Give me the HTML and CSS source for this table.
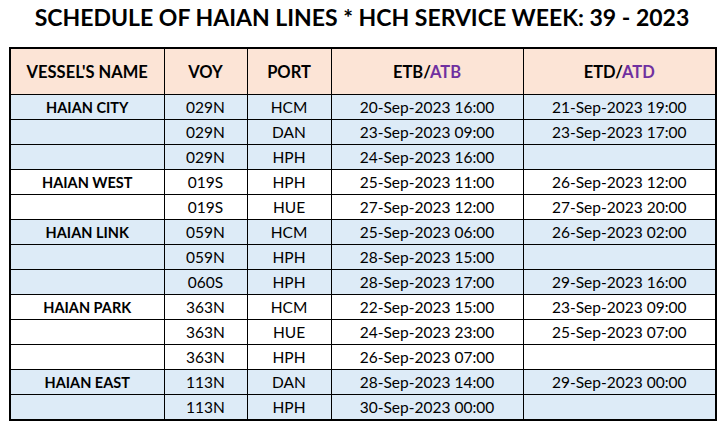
FILE: index.html
```html
<!DOCTYPE html>
<html>
<head>
<meta charset="utf-8">
<link rel="stylesheet" href="styles.css">
</head>
<body>
<div class="page">
  <h1 class="title">SCHEDULE OF HAIAN LINES * HCH SERVICE WEEK: 39 - 2023</h1>
  <table class="sched">
    <colgroup>
      <col class="c-vessel"><col class="c-voy"><col class="c-port"><col class="c-etb"><col class="c-etd">
    </colgroup>
    <thead>
      <tr class="head">
        <th>VESSEL'S NAME</th><th>VOY</th><th>PORT</th>
        <th>ETB/<span class="actual">ATB</span></th>
        <th>ETD/<span class="actual">ATD</span></th>
      </tr>
    </thead>
    <tbody>
      <tr class="blue"><td class="vessel">HAIAN CITY</td><td>029N</td><td>HCM</td><td>20-Sep-2023 16:00</td><td>21-Sep-2023 19:00</td></tr>
      <tr class="blue"><td class="vessel"></td><td>029N</td><td>DAN</td><td>23-Sep-2023 09:00</td><td>23-Sep-2023 17:00</td></tr>
      <tr class="blue"><td class="vessel"></td><td>029N</td><td>HPH</td><td>24-Sep-2023 16:00</td><td></td></tr>
      <tr><td class="vessel">HAIAN WEST</td><td>019S</td><td>HPH</td><td>25-Sep-2023 11:00</td><td>26-Sep-2023 12:00</td></tr>
      <tr><td class="vessel"></td><td>019S</td><td>HUE</td><td>27-Sep-2023 12:00</td><td>27-Sep-2023 20:00</td></tr>
      <tr class="blue"><td class="vessel">HAIAN LINK</td><td>059N</td><td>HCM</td><td>25-Sep-2023 06:00</td><td>26-Sep-2023 02:00</td></tr>
      <tr class="blue"><td class="vessel"></td><td>059N</td><td>HPH</td><td>28-Sep-2023 15:00</td><td></td></tr>
      <tr class="blue"><td class="vessel"></td><td>060S</td><td>HPH</td><td>28-Sep-2023 17:00</td><td>29-Sep-2023 16:00</td></tr>
      <tr><td class="vessel">HAIAN PARK</td><td>363N</td><td>HCM</td><td>22-Sep-2023 15:00</td><td>23-Sep-2023 09:00</td></tr>
      <tr><td class="vessel"></td><td>363N</td><td>HUE</td><td>24-Sep-2023 23:00</td><td>25-Sep-2023 07:00</td></tr>
      <tr><td class="vessel"></td><td>363N</td><td>HPH</td><td>26-Sep-2023 07:00</td><td></td></tr>
      <tr class="blue"><td class="vessel">HAIAN EAST</td><td>113N</td><td>DAN</td><td>28-Sep-2023 14:00</td><td>29-Sep-2023 00:00</td></tr>
      <tr class="blue"><td class="vessel"></td><td>113N</td><td>HPH</td><td>30-Sep-2023 00:00</td><td></td></tr>
    </tbody>
  </table>
</div>
</body>
</html>
```

FILE: styles.css
```css
html, body {
  margin: 0;
  padding: 0;
  background: #ffffff;
}

.page {
  width: 724px;
  padding: 0 0 0 9px;
  box-sizing: border-box;
  font-family: Lato, "Open Sans", sans-serif;
  color: #000;
}

.title {
  margin: 0;
  padding: 4px 0 0 0;
  height: 47px;
  box-sizing: border-box;
  width: 706px;
  text-align: center;
  font-size: 23px;
  font-weight: 700;
  line-height: 26px;
}

.sched {
  border-collapse: collapse;
  table-layout: fixed;
  width: 706px;
  border: 2px solid #000;
  font-size: 15.5px;
}

.c-vessel { width: 154px; }
.c-voy { width: 83px; }
.c-port { width: 84px; }
.c-etb { width: 192px; }
.c-etd { width: 193px; }

.sched th,
.sched td {
  border: 1px solid #000;
  text-align: center;
  padding: 0;
  white-space: nowrap;
}

.sched td {
  height: 24px;
  font-weight: 400;
}

.head th {
  height: 45px;
  background: #fce4d6;
  font-weight: 700;
  font-size: 16.5px;
}

.actual {
  color: #7030a0;
}

.blue td {
  background: #ddebf7;
}

.sched td.vessel {
  font-weight: 700;
  font-size: 14.5px;
}
```
